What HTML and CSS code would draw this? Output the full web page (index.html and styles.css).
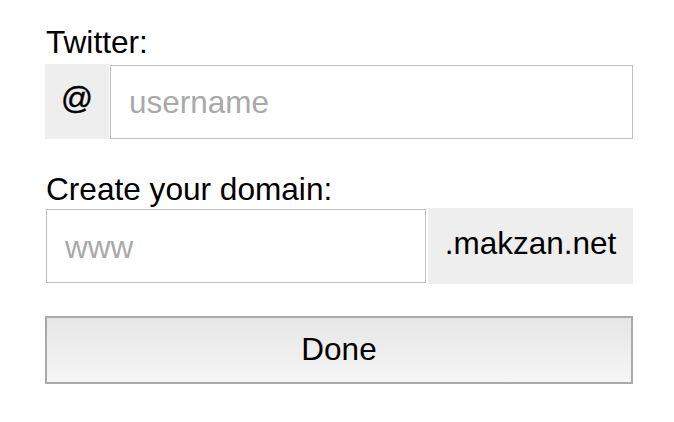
FILE: index.html
```html
<!DOCTYPE html>
<html>
<head>
<meta charset="utf-8">
<link rel="stylesheet" href="styles.css">
</head>
<body>
<form class="form">
  <label class="label" for="tw">Twitter:</label>
  <div class="group group-twitter">
    <span class="addon addon-at">@</span>
    <input class="field field-user" id="tw" type="text" placeholder="username">
  </div>
  <label class="label label-domain" for="dm">Create your domain:</label>
  <div class="group group-domain">
    <input class="field field-domain" id="dm" type="text" placeholder="www">
    <span class="addon addon-domain">.makzan.net</span>
  </div>
  <button class="done" type="button">Done</button>
</form>
</body>
</html>
```
FILE: styles.css
```css
html, body {
  margin: 0;
  padding: 0;
  background: #fff;
}
body {
  font-family: "Liberation Sans", Arial, sans-serif;
  color: #000;
}
.form {
  width: 588px;
  padding: 24px 0 0 45px;
  display: flex;
  flex-direction: column;
}
.label {
  display: block;
  font-size: 31.6px;
  line-height: 36px;
  padding-left: 1px;
  margin-bottom: 4px;
}
.label-domain {
  margin-top: 32px;
  margin-bottom: 1px;
}
.group {
  display: flex;
  align-items: center;
}
.addon {
  background: #eeeeee;
  font-size: 31.5px;
  display: flex;
  align-items: center;
  justify-content: center;
  box-sizing: border-box;
}
.addon-at {
  width: 64px;
  height: 75px;
  padding-bottom: 7px;
  margin-right: 1px;
  -webkit-text-stroke: 0.4px #000;
}
.field {
  box-sizing: border-box;
  border: 1px solid #c0c0c0;
  font-family: "Liberation Sans", Arial, sans-serif;
  font-size: 31.5px;
  height: 74px;
  margin: 0;
  outline: none;
  background: #fff;
}
.field::placeholder {
  color: #a9a9a9;
}
.field-user {
  flex: 1;
  padding: 2px 0 0 18px;
}
.field-domain {
  width: 380px;
  margin-left: 1px;
  padding: 2px 0 0 18px;
  height: 74px;
}
.addon-domain {
  flex: 1;
  height: 76px;
  margin-left: 2px;
  padding-bottom: 6px;
}
.done {
  margin-top: 32px;
  width: 588px;
  height: 68px;
  box-sizing: border-box;
  border: 2px solid #aaaaaa;
  border-radius: 0;
  background: linear-gradient(#e6e6e6, #f6f6f6);
  font-family: "Liberation Sans", Arial, sans-serif;
  font-size: 31.5px;
  color: #000;
  padding: 0 0 2px 0;
}
```
